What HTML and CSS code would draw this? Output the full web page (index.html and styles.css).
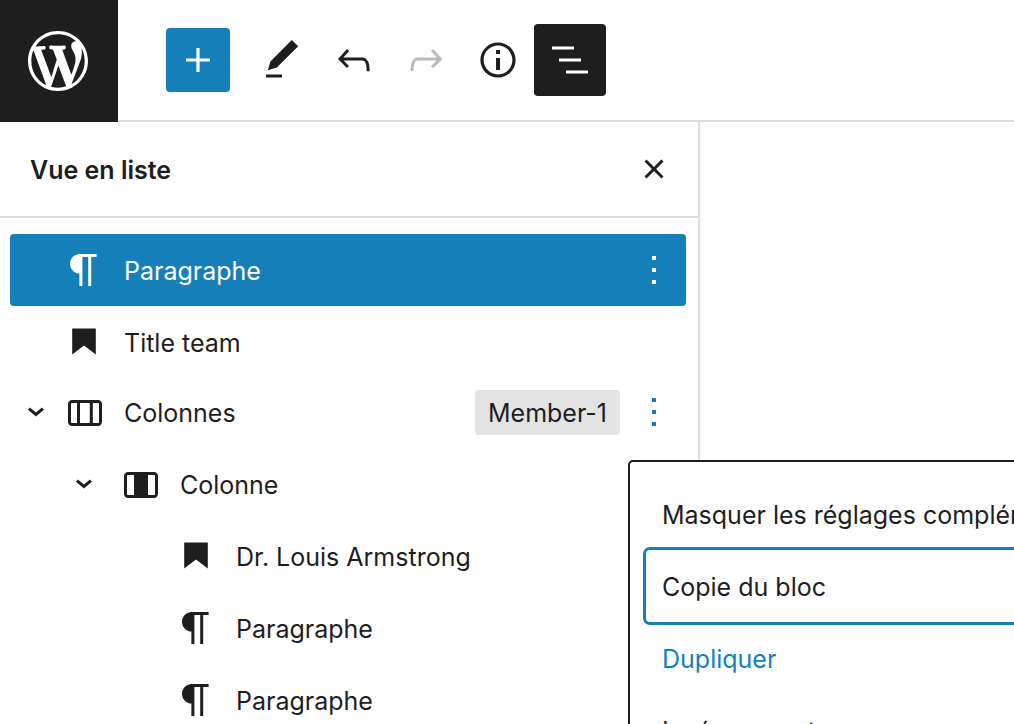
FILE: index.html
```html
<!DOCTYPE html>
<html lang="fr">
<head>
<meta charset="utf-8">
<title>Vue en liste</title>
<link rel="stylesheet" href="styles.css">
</head>
<body>
<svg class="symbols" aria-hidden="true">
  <symbol id="paragraph" viewBox="0 0 24 24"><path d="M18.3 4H9.9v-.1l-.9.2c-2.3.4-4 2.4-4 4.8s1.7 4.4 4 4.8l.7.1V20h1.5V5.5h2.9V20h1.5V5.5h2.7V4z"/></symbol>
  <symbol id="bookmark" viewBox="0 0 24 24"><path d="M6.1 5.2h11.8v13.1L12 13.8l-5.9 4.5z"/></symbol>
  <symbol id="columns" viewBox="0 0 24 24"><path d="M19 6H6c-1.1 0-2 .9-2 2v9c0 1.1.9 2 2 2h13c1.1 0 2-.9 2-2V8c0-1.1-.9-2-2-2zm-4.1 1.5v10H10v-10h4.9zM5.5 17V8c0-.3.2-.5.5-.5h2.5v10H6c-.3 0-.5-.2-.5-.5zm14 0c0 .3-.2.5-.5.5h-2.6v-10H19c.3 0 .5.2.5.5v9z"/></symbol>
  <symbol id="column" viewBox="0 0 24 24"><path d="M19 6H6c-1.1 0-2 .9-2 2v9c0 1.1.9 2 2 2h13c1.1 0 2-.9 2-2V8c0-1.1-.9-2-2-2zM6 17.5c-.3 0-.5-.2-.5-.5V8c0-.3.2-.5.5-.5h3v10H6zm13.500-.5c0 .3-.2.5-.5.5h-3v-10h3c.3 0 .5.2.5.5v9z"/></symbol>
  <symbol id="chevron" viewBox="0 0 24 24"><path transform="rotate(90 12 12)" d="M10.862 8.04l3.418 3.989-3.418 3.988-1.139-.977 2.582-3.011-2.582-3.012z"/></symbol>
  <symbol id="more" viewBox="0 0 24 24"><path d="M13 19h-2v-2h2v2zm0-6h-2v-2h2v2zm0-6h-2V5h2v2z"/></symbol>
</svg>

<header class="toolbar">
  <a class="logo" href="#" aria-label="WordPress"><svg class="logo-icon" viewBox="-2 -2 24 24"><path d="M20 10c0-5.51-4.49-10-10-10C4.48 0 0 4.49 0 10c0 5.52 4.48 10 10 10 5.51 0 10-4.48 10-10zM7.780 15.370L4.370 6.220c.55-.02 1.170-.08 1.170-.08.5-.06.44-1.130-.06-1.110 0 0-1.450.11-2.370.11-.18 0-.37 0-.58-.01C4.120 2.690 6.870 1.110 10 1.110c2.330 0 4.450.87 6.050 2.340-.68-.11-1.650.39-1.650 1.580 0 .74.45 1.360.9 2.100.35.610.55 1.360.55 2.460 0 1.490-1.400 5-1.400 5l-3.030-8.370c.54-.02.82-.17.82-.17.5-.05.44-1.250-.06-1.220 0 0-1.440.12-2.380.12-.87 0-2.330-.12-2.330-.12-.5-.03-.56 1.200-.06 1.220l.92.080 1.260 3.410zM17.410 10c.24-.64.74-1.870.43-4.250.7 1.290 1.050 2.710 1.050 4.250 0 3.290-1.730 6.240-4.400 7.780.97-2.590 1.940-5.200 2.920-7.780zM6.100 18.090C3.120 16.650 1.110 13.530 1.110 10c0-1.300.23-2.480.72-3.590C3.250 10.300 4.670 14.200 6.100 18.090zm4.030-6.630l2.580 6.980c-.86.29-1.760.45-2.710.45-.79 0-1.570-.11-2.290-.33.81-2.380 1.620-4.740 2.420-7.100z"/></svg></a>
  <div class="tools">
    <button class="inserter" aria-label="Ajouter un bloc"><svg class="icon" viewBox="0 0 24 24"><path d="M18 11.2h-5.2V6h-1.6v5.2H6v1.6h5.2V18h1.6v-5.2H18z"/></svg></button>
    <div class="tool-group">
      <button class="tool" aria-label="Outils"><svg class="icon" viewBox="0 0 24 24"><path d="M20.1 5.1L16.900 2 6.200 12.700l-1.300 4.400 4.500-1.300L20.100 5.100zM4 20.800h8v-1.500H4v1.500z"/></svg></button>
      <button class="tool" aria-label="Annuler"><svg class="icon" viewBox="0 0 24 24"><path d="M18.3 11.700c-.6-.6-1.400-.9-2.300-.9H6.700l2.900-3.300-1.100-1-4.500 5L8.500 16l1-1-2.700-2.700H16c.5 0 .9.2 1.300.5 1 1 1 3.400 1 4.500v.3h1.500v-.2c0-1.500 0-4.300-1.500-5.700z"/></svg></button>
      <button class="tool" aria-label="Rétablir" disabled><svg class="icon" viewBox="0 0 24 24"><path d="M15.600 6.500l-1.100 1 2.900 3.300H8c-.9 0-1.700.3-2.300.9-1.400 1.500-1.400 4.200-1.400 5.600v.2h1.500v-.3c0-1.100 0-3.500 1-4.500.3-.3.7-.5 1.300-.5h9.200L14.500 15l1.100 1.100 4.600-4.600-4.600-5z"/></svg></button>
      <button class="tool" aria-label="Détails"><svg class="icon" viewBox="0 0 24 24"><path d="M12 3.200c-4.800 0-8.800 3.900-8.800 8.800 0 4.800 3.900 8.800 8.800 8.800 4.800 0 8.800-3.900 8.800-8.800 0-4.800-4-8.800-8.800-8.800zm0 16c-4 0-7.200-3.300-7.200-7.200C4.800 8 8 4.800 12 4.800s7.200 3.300 7.200 7.200c0 4-3.200 7.200-7.200 7.200zM11 17h2v-6h-2v6zm0-8h2V7h-2v2z"/></svg></button>
      <button class="tool pressed" aria-label="Vue en liste" aria-pressed="true"><svg class="icon" viewBox="0 0 24 24"><path d="M3 5.250h11v1.500H3zM6.500 11.250h11v1.500h-11zM10 17.250h11v1.500H10z"/></svg></button>
    </div>
  </div>
</header>

<main class="workspace">
  <aside class="panel">
    <div class="panel-header">
      <h2 class="panel-title label">Vue en liste</h2>
      <button class="icon-button" aria-label="Fermer"><svg class="icon" viewBox="0 0 24 24"><path d="M12 13.060l3.712 3.713 1.061-1.060L13.061 12l3.712-3.712-1.060-1.060L12 10.938 8.288 7.227l-1.061 1.060L10.939 12l-3.712 3.712 1.060 1.061L12 13.061z"/></svg></button>
    </div>
    <ul class="tree">
      <li class="row selected level-1">
        <a class="block" href="#"><svg class="icon"><use href="#paragraph"/></svg><span class="label">Paragraphe</span></a>
        <button class="icon-button" aria-label="Options"><svg class="icon"><use href="#more"/></svg></button>
      </li>
      <li class="row compact level-1"><a class="block" href="#"><svg class="icon"><use href="#bookmark"/></svg><span class="label">Title team</span></a></li>
      <li class="row expandable level-1">
        <button class="icon-button" aria-label="Replier Colonnes"><svg class="icon"><use href="#chevron"/></svg></button>
        <a class="block" href="#"><svg class="icon"><use href="#columns"/></svg><span class="label">Colonnes</span></a>
        <span class="badge">Member-1</span>
        <button class="icon-button accent" aria-label="Options"><svg class="icon"><use href="#more"/></svg></button>
      </li>
      <li class="row expandable level-2">
        <button class="icon-button" aria-label="Replier Colonne"><svg class="icon"><use href="#chevron"/></svg></button>
        <a class="block" href="#"><svg class="icon"><use href="#column"/></svg><span class="label">Colonne</span></a>
      </li>
      <li class="row level-3"><a class="block" href="#"><svg class="icon"><use href="#bookmark"/></svg><span class="label">Dr. Louis Armstrong</span></a></li>
      <li class="row level-3"><a class="block" href="#"><svg class="icon"><use href="#paragraph"/></svg><span class="label">Paragraphe</span></a></li>
      <li class="row level-3"><a class="block" href="#"><svg class="icon"><use href="#paragraph"/></svg><span class="label">Paragraphe</span></a></li>
    </ul>
  </aside>
  <div class="menu" role="menu">
    <button class="menu-item" role="menuitem">Masquer les réglages complémentaires</button>
    <button class="menu-item focused" role="menuitem">Copie du bloc</button>
    <button class="menu-item accent" role="menuitem">Dupliquer</button>
    <button class="menu-item" role="menuitem">Insérer avant</button>
  </div>
</main>
</body>
</html>
```

FILE: styles.css
```css
:root {
  --ink: #1e1e1e;
  --accent: #157fb9;
  --line: #dddddd;
}

* {
  box-sizing: border-box;
}

body {
  margin: 0;
  height: 100vh;
  display: flex;
  flex-direction: column;
  overflow: hidden;
  background: #fff;
  color: var(--ink);
  font: 25px/36px Inter, "Liberation Sans", sans-serif;
}

button {
  margin: 0;
  padding: 0;
  border: 0;
  background: none;
  color: inherit;
  font: inherit;
}

a {
  color: inherit;
  text-decoration: none;
}

.symbols {
  display: none;
}

.icon {
  display: block;
  flex: none;
  width: 48px;
  height: 48px;
  fill: currentColor;
}

.toolbar {
  display: flex;
  flex: none;
}

.logo {
  display: grid;
  place-items: center;
  width: 118px;
  height: 122px;
  padding-right: 2px;
  background: var(--ink);
  color: #fff;
}

.logo-icon {
  width: 72px;
  height: 72px;
  fill: currentColor;
}

.tools {
  display: flex;
  flex: 1;
  align-items: center;
  gap: 16px;
  padding-left: 48px;
  border-bottom: 2px solid var(--line);
}

.inserter {
  display: grid;
  place-items: center;
  width: 64px;
  height: 64px;
  border-radius: 4px;
  background: var(--accent);
  color: #fff;
}

.tool-group {
  display: flex;
}

.tool {
  display: grid;
  place-items: center;
  width: 72px;
  height: 72px;
  border-radius: 4px;
}

.tool:disabled {
  color: #bbb;
}

.pressed {
  background: var(--ink);
  color: #fff;
}

.workspace {
  position: relative;
  flex: 1;
  min-height: 0;
}

.panel {
  width: 700px;
  height: 100%;
  overflow: hidden;
  border-right: 2px solid var(--line);
}

.panel-header {
  display: flex;
  align-items: center;
  justify-content: space-between;
  height: 96px;
  padding: 0 20px 0 30px;
  border-bottom: 2px solid var(--line);
}

.panel-title {
  margin: 0;
  font-size: 25px;
  font-weight: 600;
}

.label {
  padding-top: 2px;
}

.tree {
  margin: 0;
  padding: 16px 12px 0 10px;
  list-style: none;
}

.row {
  display: flex;
  align-items: center;
  height: 72px;
  padding-right: 8px;
  border-radius: 4px;
}

.compact {
  height: 70px;
  padding-top: 2px;
}

.selected {
  background: var(--accent);
  color: #fff;
}

.level-1 {
  padding-left: 50px;
}

.level-1.expandable {
  padding-left: 2px;
}

.level-2.expandable {
  gap: 8px;
  padding-left: 50px;
}

.level-3 {
  padding-left: 162px;
}

.block {
  display: flex;
  flex: 1;
  align-items: center;
  gap: 16px;
}

.badge {
  margin-right: 10px;
  padding: 5px 13px 4px;
  border-radius: 4px;
  background: #e3e3e3;
}

.accent {
  color: var(--accent);
}

.menu {
  position: absolute;
  top: 338px;
  left: 628px;
  width: 560px;
  padding: 16px;
  border: 2px solid var(--ink);
  border-radius: 5px;
  background: #fff;
}

.menu-item {
  display: block;
  width: 100%;
  height: 72px;
  padding: 2px 16px 0;
  border-radius: 4px;
  text-align: left;
  white-space: nowrap;
}

.focused {
  box-shadow: 0 0 0 3px var(--accent);
}
```
